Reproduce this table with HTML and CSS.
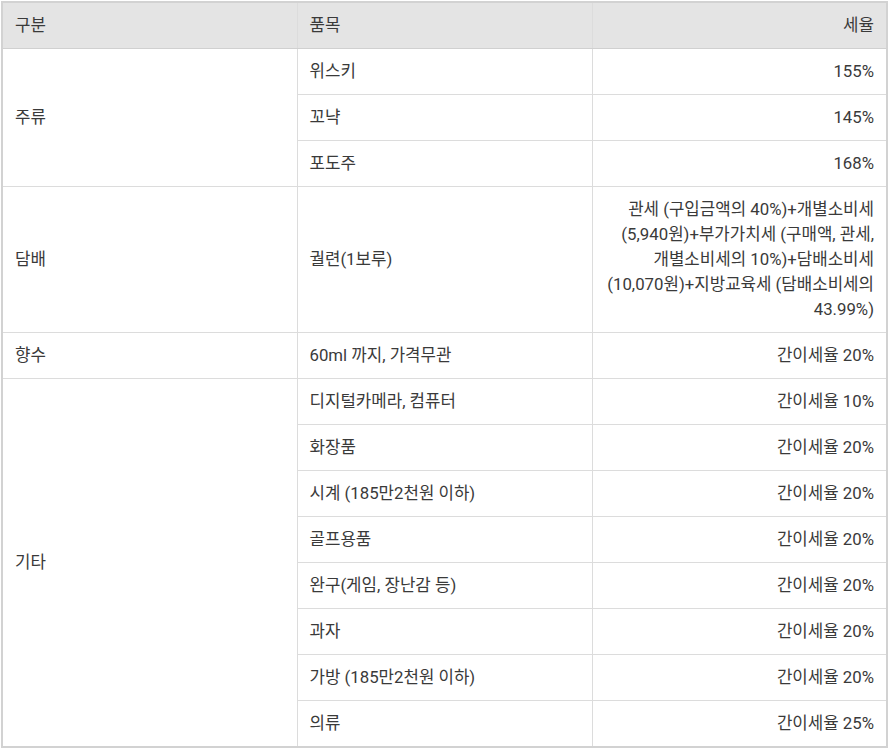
FILE: index.html
```html
<!DOCTYPE html>
<html lang="ko">
<head>
<meta charset="utf-8">
<link rel="stylesheet" href="styles.css">
</head>
<body>
<table class="tax">
  <colgroup><col class="c1"><col class="c2"><col class="c3"></colgroup>
  <thead>
    <tr><th>구분</th><th>품목</th><th class="r">세율</th></tr>
  </thead>
  <tbody>
    <tr><td rowspan="3">주류</td><td>위스키</td><td class="r">155%</td></tr>
    <tr><td>꼬냑</td><td class="r">145%</td></tr>
    <tr><td>포도주</td><td class="r">168%</td></tr>
    <tr><td>담배</td><td>궐련(1보루)</td><td class="r">관세 (구입금액의 40%)+개별소비세<br>(5,940원)+부가가치세 (구매액, 관세,<br>개별소비세의 10%)+담배소비세<br>(10,070원)+지방교육세 (담배소비세의<br>43.99%)</td></tr>
    <tr><td>향수</td><td>60ml 까지, 가격무관</td><td class="r">간이세율 20%</td></tr>
    <tr><td rowspan="8">기타</td><td>디지털카메라, 컴퓨터</td><td class="r">간이세율 10%</td></tr>
    <tr><td>화장품</td><td class="r">간이세율 20%</td></tr>
    <tr><td>시계 (185만2천원 이하)</td><td class="r">간이세율 20%</td></tr>
    <tr><td>골프용품</td><td class="r">간이세율 20%</td></tr>
    <tr><td>완구(게임, 장난감 등)</td><td class="r">간이세율 20%</td></tr>
    <tr><td>과자</td><td class="r">간이세율 20%</td></tr>
    <tr><td>가방 (185만2천원 이하)</td><td class="r">간이세율 20%</td></tr>
    <tr><td>의류</td><td class="r">간이세율 25%</td></tr>
  </tbody>
</table>
</body>
</html>
```
FILE: styles.css
```css
html, body {
  margin: 0;
  padding: 0;
  background: #fff;
}
body {
  padding: 1px;
}
.tax {
  width: 887px;
  border-collapse: collapse;
  border: 2px solid #d2d2d2;
  table-layout: fixed;
  font-family: Roboto, "Noto Sans CJK KR", sans-serif;
  font-size: 16.8px;
  line-height: 25px;
  color: #3a3a3a;
}
.c1, .c2, .c3 { width: 33.333%; }
.tax th, .tax td {
  border: 1px solid #dcdcdc;
  padding: 10px 12px;
  text-align: left;
  vertical-align: middle;
  font-weight: normal;
}
.tax thead th {
  background: #e4e4e4;
  border-bottom-color: #d0d0d0;
}
.tax .r {
  text-align: right;
}
```
